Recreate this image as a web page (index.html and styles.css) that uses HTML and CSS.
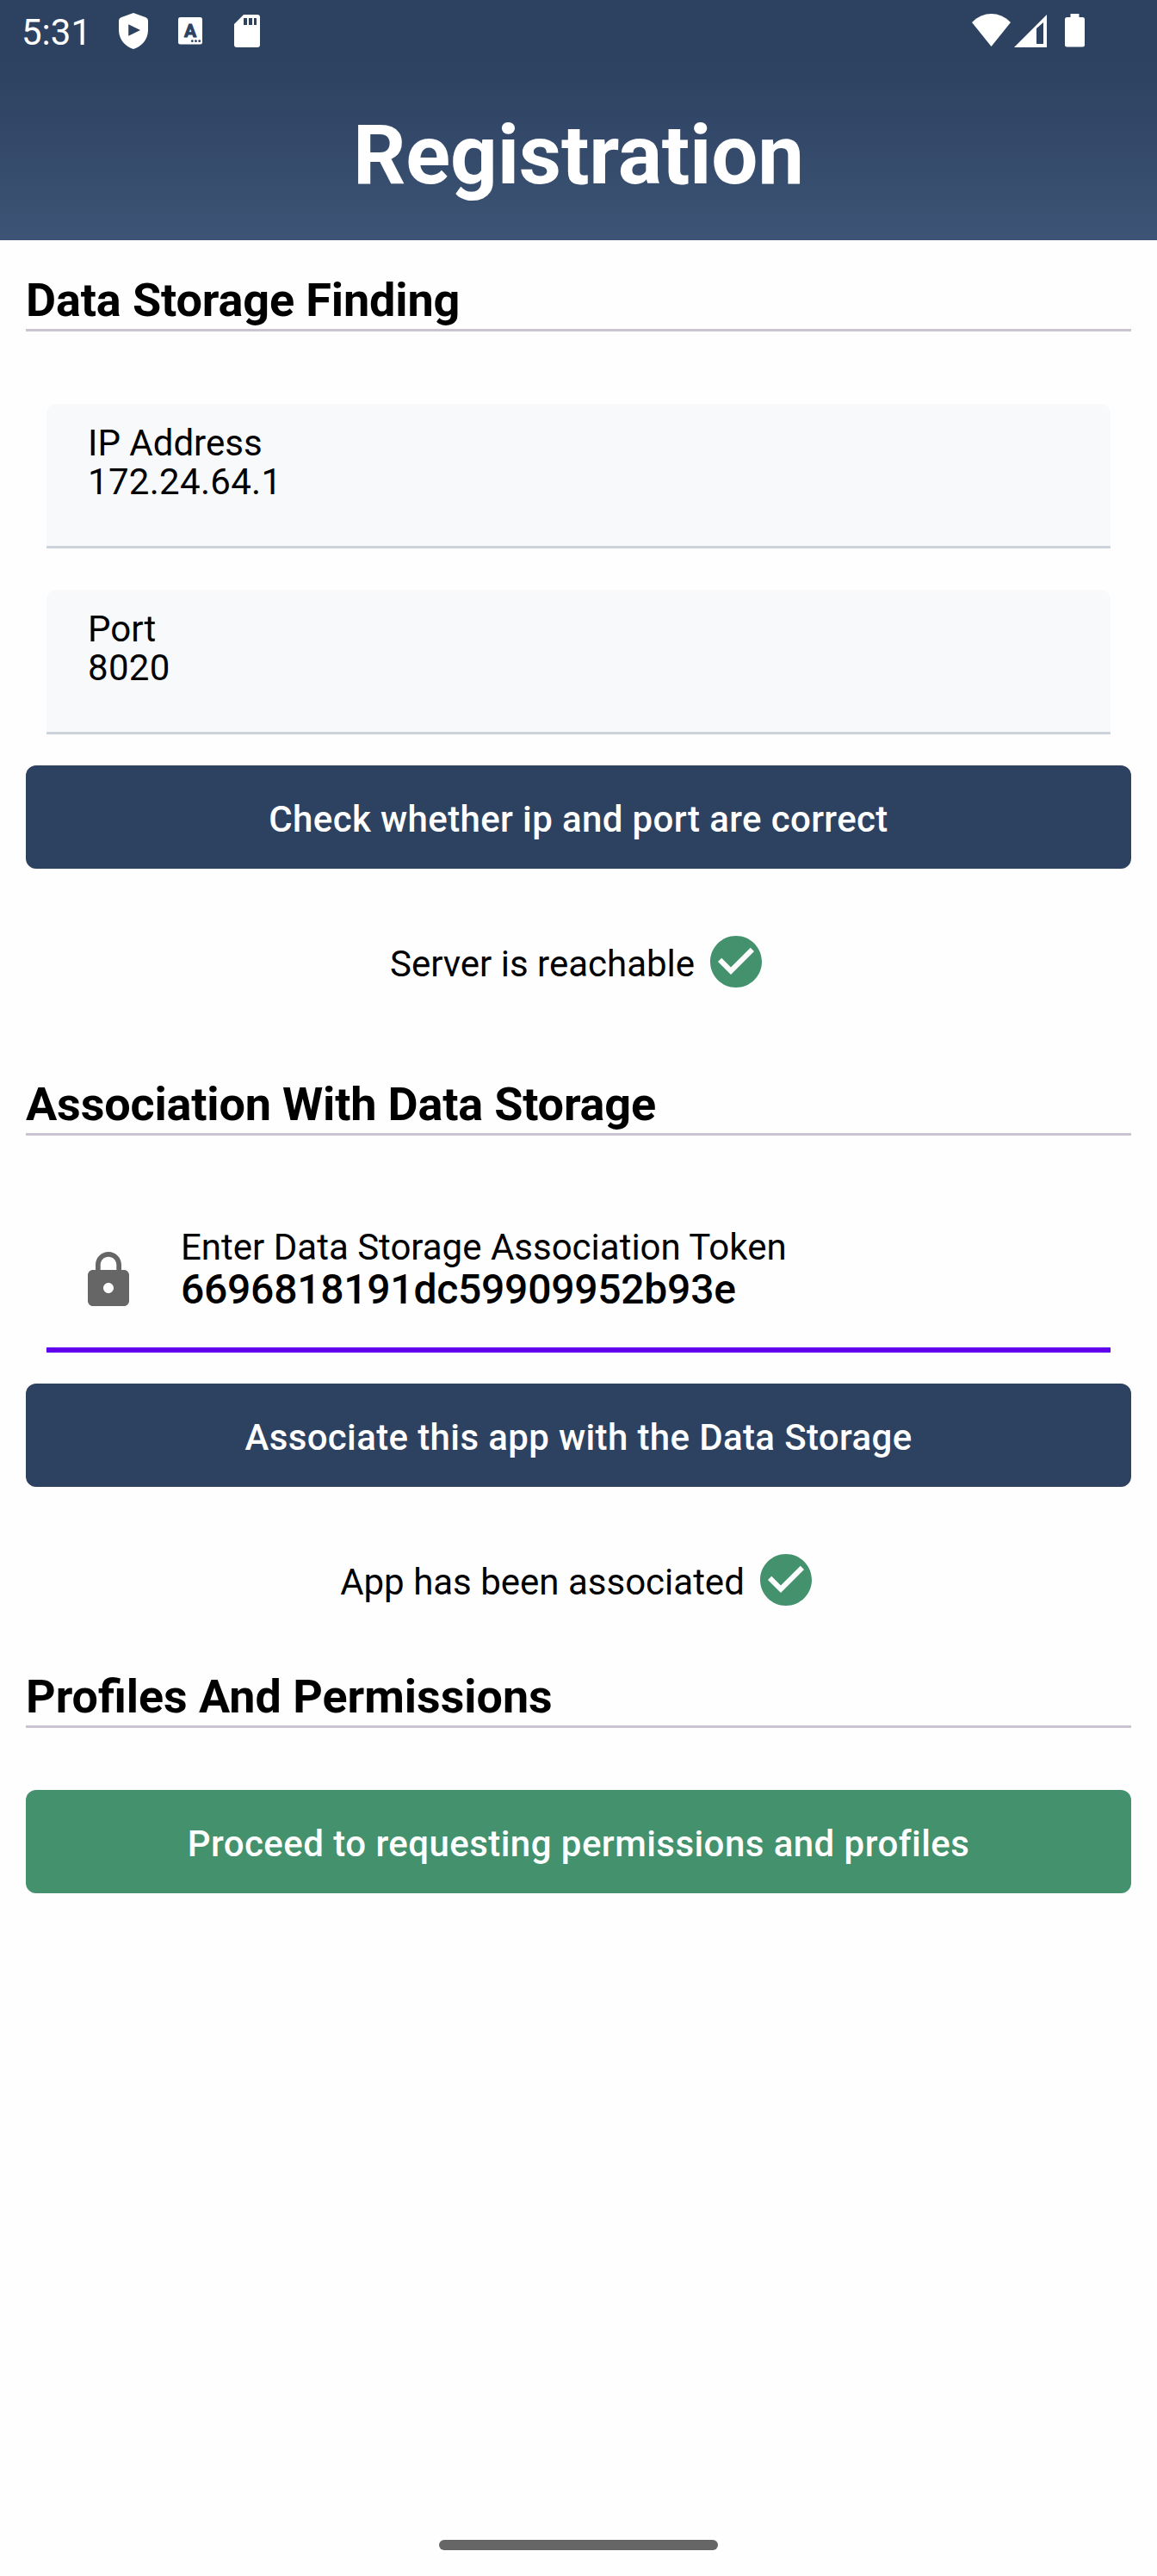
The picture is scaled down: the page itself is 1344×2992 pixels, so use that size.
FILE: index.html
```html
<!DOCTYPE html>
<html lang="en">
<head>
<meta charset="utf-8">
<title>Registration</title>
<link rel="stylesheet" href="styles.css">
</head>
<body>
<header class="app-header">
  <div class="status-bar">
    <span class="clock">5:31</span>
    <svg class="shield" width="34" height="42" viewBox="0 0 34 42"><path fill="#fff" fill-rule="evenodd" d="M17 0 31.500 5.300Q34 6.300 34 9V20C34 31 26 39.500 17 42C8 39.500 0 31 0 20V9Q0 6.300 2.500 5.300ZM11.200 13.200V26.800L25 20Z"/></svg>
    <svg class="keyboard" width="28" height="32" viewBox="0 0 28 32"><rect width="28" height="31.500" rx="2.500" fill="#fff"/><text class="keyboard-letter" x="14" y="22.700" text-anchor="middle">A</text><g fill="#2d4160"><circle cx="16.300" cy="27.700" r="1.400"/><circle cx="20.500" cy="27.700" r="1.400"/><circle cx="24.700" cy="27.700" r="1.400"/></g></svg>
    <svg class="sd-card" width="30" height="38" viewBox="0 0 30 38"><path fill="#fff" fill-rule="evenodd" d="M11 0H27Q30 0 30 3V35Q30 38 27 38H3Q0 38 0 35V11ZM11 4V12H15V4ZM17 4V12H21V4ZM23 4V12H26V4Z"/></svg>
    <span class="spacer"></span>
    <svg class="wifi" width="45" height="38" viewBox="0 0 45 38"><path fill="#fff" d="M0 10C13-3.300 32-3.300 45 10L22.500 38Z"/></svg>
    <svg class="signal" width="38" height="38" viewBox="0 0 38 38"><path fill="#fff" fill-rule="evenodd" d="M0 38H38V0ZM26 16V34H34V9Z"/></svg>
    <svg class="battery" width="23" height="39" viewBox="0 0 23 39"><path fill="#fff" d="M6.500 0H16.500V4H20.500Q23 4 23 6.500V36Q23 38.500 20.500 38.500H2.500Q0 38.500 0 36V6.500Q0 4 2.500 4H6.500Z"/></svg>
  </div>
  <h1 class="title">Registration</h1>
</header>
<main class="content">
  <h2 class="section-title">Data Storage Finding</h2>
  <div class="field">
    <div class="field-text"><label class="label">IP Address</label><div class="value">172.24.64.1</div></div>
  </div>
  <div class="field field-next">
    <div class="field-text"><label class="label">Port</label><div class="value">8020</div></div>
  </div>
  <button class="button">Check whether ip and port are correct</button>
  <div class="result">
    <span class="result-text">Server is reachable</span>
    <svg width="72" height="72" viewBox="0 0 24 24"><path fill="#43926d" d="M12 2C6.480 2 2 6.480 2 12s4.480 10 10 10 10-4.480 10-10S17.520 2 12 2zm-2 15l-5-5 1.410-1.410L10 14.170l7.590-7.590L19 8l-9 9z"/></svg>
  </div>
  <h2 class="section-title section-association">Association With Data Storage</h2>
  <div class="field field-token">
    <svg class="lock" width="72" height="72" viewBox="0 0 24 24"><path fill="#666" d="M18 8h-1V6c0-2.760-2.240-5-5-5S7 3.240 7 6v2H6c-1.100 0-2 .9-2 2v10c0 1.100.9 2 2 2h12c1.100 0 2-.9 2-2V10c0-1.100-.9-2-2-2zm-6 9c-1.100 0-2-.9-2-2s.9-2 2-2 2 .9 2 2-.9 2-2 2zm3.100-9H8.900V6c0-1.710 1.390-3.100 3.100-3.100 1.710 0 3.100 1.390 3.100 3.100v2z"/></svg>
    <div class="field-text"><label class="label">Enter Data Storage Association Token</label><div class="value value-token">6696818191dc59909952b93e</div></div>
  </div>
  <button class="button">Associate this app with the Data Storage</button>
  <div class="result">
    <span class="result-text">App has been associated</span>
    <svg width="72" height="72" viewBox="0 0 24 24"><path fill="#43926d" d="M12 2C6.480 2 2 6.480 2 12s4.480 10 10 10 10-4.480 10-10S17.520 2 12 2zm-2 15l-5-5 1.410-1.410L10 14.170l7.590-7.590L19 8l-9 9z"/></svg>
  </div>
  <h2 class="section-title section-profiles">Profiles And Permissions</h2>
  <button class="button button-proceed">Proceed to requesting permissions and profiles</button>
</main>
<footer class="nav-bar"><div class="nav-pill"></div></footer>
</body>
</html>
```
FILE: styles.css
```css
* { box-sizing: border-box; }
body {
  margin: 0;
  width: 1344px;
  height: 2992px;
  display: flex;
  flex-direction: column;
  background: #fefefe;
  color: #000;
  font-family: Roboto, sans-serif;
}
.app-header {
  height: 279px;
  background: linear-gradient(#2d4160 0, #2d4160 72px, #3d5476 279px);
  color: #fff;
}
.status-bar {
  height: 72px;
  padding: 0 84px 0 25px;
  display: flex;
  align-items: flex-start;
}
.clock { width: 113px; font-size: 42px; line-height: 50px; padding-top: 13px; }
.shield { margin-top: 15px; }
.keyboard { margin: 20px 0 0 35px; }
.keyboard-letter {
  font: 700 21px Roboto, sans-serif;
  fill: #2d4160;
  stroke: #2d4160;
  stroke-width: 1;
  stroke-linejoin: round;
}
.sd-card { margin: 17px 0 0 37px; }
.spacer { flex: 1; }
.wifi { margin-top: 16px; }
.signal { margin: 17px 0 0 4px; }
.battery { margin: 16px 0 0 21px; }
.title {
  margin: 51px 0 0;
  text-align: center;
  font-size: 96px;
  line-height: 114px;
  font-weight: 700;
  letter-spacing: -0.2px;
}
.content { flex: 1; padding: 38px 30px 0; }
.section-title {
  margin: 0;
  padding-bottom: 2px;
  border-bottom: 3px solid #cac4d0;
  font-size: 54px;
  line-height: 63px;
  font-weight: 700;
  letter-spacing: -0.14px;
}
.section-association { margin-top: 98px; letter-spacing: -0.19px; }
/* Normal spacing keeps the "fi" ligature */
.section-profiles { margin-top: 68px; font-size: 53.8px; letter-spacing: normal; }
.field {
  display: flex;
  height: 168px;
  margin: 84px 24px 0;
  padding: 23px 48px 0;
  background: #f8f9fb;
  border-bottom: 3px solid #cdd3db;
  border-radius: 12px 12px 0 0;
}
.field-next { margin-top: 48px; }
.field-token {
  padding-left: 36px;
  background: none;
  border-bottom: 6px solid #6200ee;
  border-radius: 0;
}
.lock { margin: 25px 48px 0 0; }
.label, .value { display: block; font-size: 42px; line-height: 45px; }
.value { letter-spacing: 0.3px; }
.value-token {
  font-size: 48px;
  line-height: 54px;
  font-weight: 500;
  letter-spacing: -0.24px;
}
.button {
  display: block;
  width: 100%;
  height: 120px;
  margin: 36px 0 0;
  padding: 5px 0 0;
  border: 0;
  border-radius: 12px;
  background: #2d4160;
  color: #fff;
  font: 500 42px/60px Roboto, sans-serif;
  letter-spacing: 0.37px;
}
.button-proceed { margin-top: 72px; background: #43926d; letter-spacing: 0.45px; }
.result {
  display: flex;
  justify-content: center;
  align-items: center;
  gap: 12px;
  height: 72px;
  margin-top: 72px;
}
.result-text { padding-top: 6px; font-size: 42px; line-height: 60px; }
.nav-bar { display: flex; justify-content: center; height: 42px; }
.nav-pill { width: 324px; height: 12px; border-radius: 6px; background: #666; }
```
